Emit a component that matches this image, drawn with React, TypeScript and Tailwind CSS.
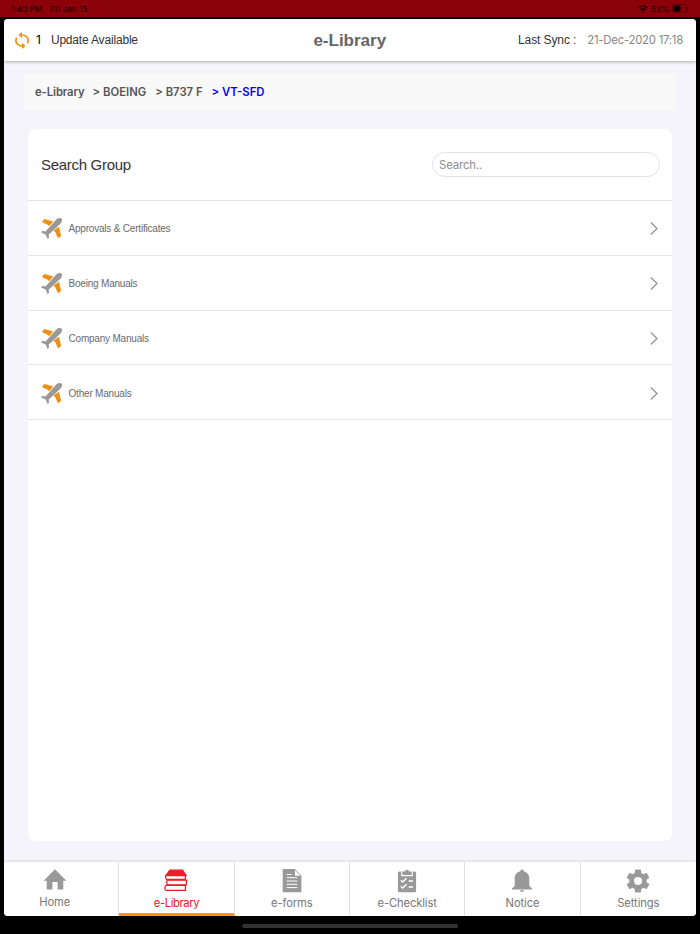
import React, { useState } from 'react';

const groups = ['Approvals & Certificates', 'Boeing Manuals', 'Company Manuals', 'Other Manuals'];

const crumbs = ['BOEING', 'B737 F'];

function SyncIcon() {
  return (
    <svg width="14" height="17" viewBox="4 1 16 22" preserveAspectRatio="none" fill="#f0930f">
      <path d="M12 4V1L8 5l4 4V6c3.31 0 6 2.69 6 6 0 1.01-.25 1.97-.7 2.8l1.46 1.46C19.54 15.03 20 13.57 20 12c0-4.42-3.58-8-8-8z" />
      <path d="M12 18c-3.31 0-6-2.69-6-6 0-1.01.25-1.97.7-2.8L5.24 7.74C4.46 8.97 4 10.43 4 12c0 4.42 3.58 8 8 8v3l4-4-4-4v3z" />
    </svg>
  );
}

function PlaneIcon() {
  return (
    <svg width="21" height="21" viewBox="0 0 21 21">
      <path d="M1.4 3.3 3.3 1.1 12.3 3.5 8.2 8.2 6.3 6.4 1.6 4.5z" fill="#ee8f17" />
      <path d="M17.9 8.8 20.1 17.6 18.3 19.8H16.7l-2.2-5.3-2-2z" fill="#ee8f17" />
      <path
        d="M15.3 1.5C16.8.1 19.4-.4 20.5.6s.5 3.4-.9 4.9L7.6 16.8l.5 3-1.5 1.1-2-4.4L.2 14.4l1.1-1.6 3.2.6z"
        fill="#999"
      />
    </svg>
  );
}

function HomeIcon() {
  return (
    <svg width="24" height="24" viewBox="0 0 24 24" fill="#999">
      <path d="M12 .3 23.4 11.7H20.3V20.5H14.6V13H9.4v7.5H3.7V11.7H.6z" />
    </svg>
  );
}

function BooksIcon() {
  return (
    <svg width="24" height="24" viewBox="0 0 24 24" fill="none" stroke="#ee1c25" strokeWidth="1.3">
      <path d="M5.8 1.2h12.6l3.6 5.2H2.2z" fill="#ee1c25" />
      <path d="M2.2 5.6c-1 1.8-.7 4.9.8 4.9h18.6M2.6 6.6h19.6M21.4 6.6v3.9" />
      <path d="M3.6 11c-1.3 1-1.1 4.8.2 4.8h18.8M3 11.2h20.4M22.4 11.2v4.6" />
      <path d="M2 16.4c-1.6.8-1.4 4.9.2 4.9h20M2 16.3h20.2M21.4 16.3v5" />
    </svg>
  );
}

function FormIcon() {
  return (
    <svg width="24" height="24" viewBox="0 0 24 24">
      <path d="M2.7 0h12.2l6.5 6.8v16.5H2.7z" fill="#999" />
      <path d="M15 1v5.8h5.4z" fill="#fff" />
      <path d="M6.7 5.5h5M6.7 8.7h10.6M6.7 12h10.6M6.7 15.3h10.6M6.7 18.6h10.6" stroke="#fff" strokeWidth="1" />
    </svg>
  );
}

function ChecklistIcon() {
  return (
    <svg width="24" height="24" viewBox="0 0 24 24">
      <rect x="2.9" y="2.5" width="18.2" height="20.8" rx="1.5" fill="#999" />
      <path d="M6.2 2v5.2h11.6V2" fill="#fff" />
      <path d="M7.3 2.4h2.4a2.4 2.4 0 0 1 4.6 0h2.4v3.7H7.3z" fill="#999" />
      <path d="M5.8 11.3 7.7 13l3.8-3.8M5.8 17.3 7.7 19l3.8-3.8M13.7 12H18M13.7 18H18" stroke="#fff" strokeWidth="1.4" fill="none" />
    </svg>
  );
}

function BellIcon() {
  return (
    <svg width="24" height="24" viewBox="0 0 24 24" fill="#999">
      <path d="M10.2 2.2a1.8 1.8 0 1 1 3.6 0c3.4.9 5.5 3.7 5.5 7.1v6.1c0 1.9.8 2.8 2.6 3.7v1.3H2.1v-1.3c1.8-.9 2.6-1.8 2.6-3.7V9.3c0-3.4 2.1-6.2 5.5-7.1z" />
      <path d="M9.7 21.3h4.6a2.4 2.4 0 0 1-4.6 0z" />
    </svg>
  );
}

function GearIcon() {
  return (
    <svg width="24" height="24" viewBox="1.6 1.6 20.8 20.8" fill="#999">
      <path d="M19.43 12.98c.04-.32.07-.64.07-.98s-.03-.66-.07-.98l2.11-1.65c.19-.15.24-.42.12-.64l-2-3.46c-.12-.22-.39-.3-.61-.22l-2.49 1c-.52-.4-1.08-.73-1.69-.98l-.38-2.65C14.46 2.18 14.25 2 14 2h-4c-.25 0-.46.18-.49.42l-.38 2.65c-.61.25-1.17.59-1.69.98l-2.49-1c-.23-.09-.49 0-.61.22l-2 3.46c-.13.22-.07.49.12.64l2.11 1.65c-.04.32-.07.65-.07.98s.03.66.07.98l-2.11 1.65c-.19.15-.24.42-.12.64l2 3.46c.12.22.39.3.61.22l2.49-1c.52.4 1.08.73 1.69.98l.38 2.65c.03.24.24.42.49.42h4c.25 0 .46-.18.49-.42l.38-2.65c.61-.25 1.17-.59 1.69-.98l2.49 1c.23.09.49 0 .61-.22l2-3.46c.12-.22.07-.49-.12-.64zM12 15.5A3.5 3.5 0 1 1 12 8.5a3.5 3.5 0 0 1 0 7z" />
    </svg>
  );
}

const tabs = [
  { label: 'Home', icon: HomeIcon },
  { label: 'e-Library', icon: BooksIcon },
  { label: 'e-forms', icon: FormIcon },
  { label: 'e-Checklist', icon: ChecklistIcon },
  { label: 'Notice', icon: BellIcon },
  { label: 'Settings', icon: GearIcon },
];

function StatusBar() {
  return (
    <div className="flex h-[17px] items-center justify-between bg-[#8b0009] pr-[11px] pl-[11px] font-['Inter',sans-serif] text-[8px] leading-none font-medium text-[#240002]">
      <div className="flex gap-[8px]">
        <span className="tracking-[0.05px]">1:40 PM</span>
        <span className="tracking-[0.12px]">Fri Jan 15</span>
      </div>
      <div className="flex items-center gap-[3px]">
        <svg width="10" height="8" viewBox="0 0 10 8" fill="none" stroke="#200002" strokeWidth="1.4">
          <path d="M.6 3a6.2 6.2 0 0 1 8.8 0M2.3 4.9a3.8 3.8 0 0 1 5.4 0" />
          <path d="M3.6 6 5 7.5 6.4 6a2 2 0 0 0-2.8 0z" fill="#200002" stroke="none" />
        </svg>
        <span>53%</span>
        <svg width="17" height="9" viewBox="0 0 17 9">
          <rect x=".5" y=".5" width="14" height="8" rx="2" fill="none" stroke="#5c0007" />
          <rect x="1.5" y="1.5" width="7" height="6" rx="1" fill="#110001" />
          <path d="M15.6 3v3" stroke="#5c0007" />
        </svg>
      </div>
    </div>
  );
}

export default function App() {
  const [query, setQuery] = useState('');
  const [active, setActive] = useState('e-Library');

  return (
    <div className="flex h-[934px] w-[700px] flex-col overflow-hidden bg-black font-['Liberation_Sans',Arial,sans-serif]">
      <StatusBar />

      <div className="mx-[4px] mt-[2px] flex h-[897px] w-[692px] shrink-0 flex-col overflow-hidden rounded-[4px] bg-[#f4f4fa]">
        {/* Header */}
        <header className="z-10 grid h-[42px] shrink-0 grid-cols-[1fr_auto_1fr] items-center bg-white pr-[13px] pl-[10.5px] text-[12px] text-[#333] shadow-[0_1px_3px_rgba(0,0,0,0.3)]">
          <div className="flex items-center">
            <SyncIcon />
            <span className="ml-[7.5px] font-['Inter',sans-serif] text-[12px] text-black">1</span>
            <span className="ml-[10px] text-[12px] tracking-[-0.18px]">Update Available</span>
          </div>
          <h1 className="translate-x-[1px] translate-y-[1px] text-[17px] font-bold text-[#666]">e-Library</h1>
          <div className="flex items-center justify-end gap-[11px]">
            <span className="tracking-[-0.1px]">Last Sync :</span>
            <span className="translate-y-[1px] font-['Inter',sans-serif] text-[11.4px] tracking-[-0.26px] text-[#888]">21-Dec-2020 17:18</span>
          </div>
        </header>

        {/* Breadcrumb */}
        <nav className="mx-[20px] mt-[13px] flex h-[36px] shrink-0 items-center bg-[#f9f9f9] pl-[11px] font-['Inter',sans-serif] text-[11.3px] font-semibold text-[#555]">
          <span className="mr-[8px] tracking-[-0.1px]">e-Library</span>
          {crumbs.map((crumb) => (
            <span key={crumb} className="mr-[9px]">&gt; {crumb}</span>
          ))}
          <span className="text-[#0505e0]">&gt; VT-SFD</span>
        </nav>

        {/* Group list */}
        <main className="mx-[24px] mt-[19px] h-[712px] shrink-0 rounded-[7px] bg-white">
          <div className="flex h-[72px] items-center justify-between border-b border-[#e4e4e4] pr-[12px] pl-[13px]">
            <h2 className="pt-[2px] text-[15px] tracking-[-0.3px] text-[#333]">Search Group</h2>
            <input
              value={query}
              onChange={(e) => setQuery(e.target.value)}
              placeholder="Search.."
              className="h-[25px] w-[228px] rounded-full border border-[#e2e2e2] px-[6px] font-['Inter',sans-serif] text-[11.4px] tracking-[-0.15px] outline-none placeholder:text-[#8e8e8e]"
            />
          </div>
          <ul>
            {groups
              .filter((g) => g.toLowerCase().includes(query.toLowerCase()))
              .map((group) => (
                <li key={group} className="flex h-[54.75px] items-center border-b border-[#e6e6e6] pt-[2px] pr-[14px] pl-[13px]">
                  <PlaneIcon />
                  <span className="ml-[6.5px] flex-1 text-[10px] tracking-[-0.2px] text-[#6a6a6a]">{group}</span>
                  <svg width="8" height="13" viewBox="0 0 8 13" fill="none" stroke="#999" strokeWidth="1.4">
                    <path d="M.9.6 7 6.5.9 12.4" />
                  </svg>
                </li>
              ))}
          </ul>
        </main>

        {/* Bottom tabs */}
        <footer className="mt-auto grid h-[54px] shrink-0 grid-cols-6 bg-white shadow-[0_-1px_2px_rgba(0,0,0,0.1)]">
          {tabs.map(({ label, icon: Icon }) => (
            <button
              key={label}
              onClick={() => setActive(label)}
              className={`flex flex-col items-center border-r pt-[7px] font-['Inter',sans-serif] text-[11.2px] leading-[14px] first:pr-[13px] last:border-r-0 ${
                label === active
                  ? 'border-b-[3px] border-r-[#e0e0e0] border-b-[#ff930f] tracking-[-0.35px] text-[#f01414]'
                  : 'border-[#e0e0e0] tracking-[-0.1px] text-[#777]'
              }`}
            >
              <Icon />
              <span className={label === 'Home' ? 'mt-[2px]' : 'mt-[3px]'}>{label}</span>
            </button>
          ))}
        </footer>
      </div>

      {/* Home indicator */}
      <div className="mt-[8px] h-[4px] w-[216px] self-center rounded-full bg-[#333]" />
    </div>
  );
}
